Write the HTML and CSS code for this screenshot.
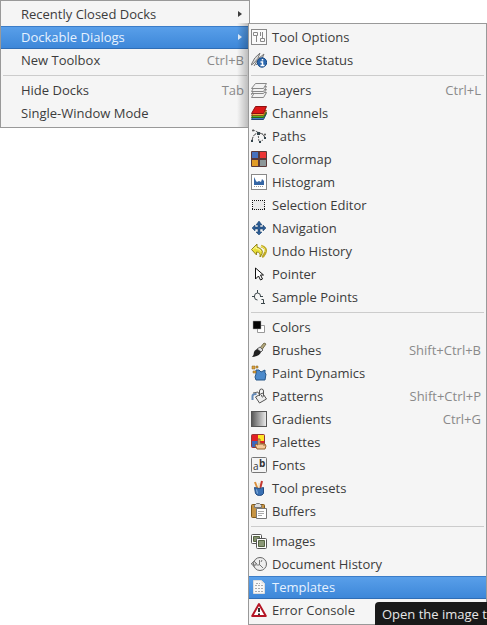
FILE: index.html
```
<!DOCTYPE html>
<html lang="en">
<head>
    <meta charset="UTF-8">
    <meta name="viewport" content="width=device-width, initial-scale=1.0">
    <title>Dockable Dialogs</title>
    <link rel="stylesheet" href="styles.css">
</head>
<body>
    <div class="menus">
        <ul class="menu root-menu">
            <li><button class="item">Recently Closed Docks <span class="arrow"></span></button></li>
            <li><button class="item selected">Dockable Dialogs <span class="arrow"></span></button></li>
            <li><button class="item">New Toolbox <kbd>Ctrl+B</kbd></button></li>
            <li class="separator"></li>
            <li><button class="item">Hide Docks <kbd>Tab</kbd></button></li>
            <li><button class="item">Single-Window Mode</button></li>
        </ul>

        <ul class="menu sub-menu">
            <li><button class="item">
                <svg class="icon" viewBox="0 0 16 16"><rect x=".5" y=".5" width="15" height="15" fill="#fafafa" stroke="#888"/><path d="M2.500 3.500h4v3h-4zM5.500 7v6M9.500 9.500h4v3h-4zM11.500 3v6M9.500 3v4" fill="none" stroke="#888"/></svg>
                Tool Options</button></li>
            <li><button class="item">
                <svg class="icon" viewBox="0 0 16 16"><path d="M0 13Q3 5 9 1Q8 7 2 12zM3 14Q7 5 13 2Q12 8 5 13" fill="#ddd" stroke="#777"/><circle cx="11" cy="10.500" r="4.700" fill="#2d68ae" stroke="#174a86"/><path d="M11.500 7v1.500M9.500 10h2v3M9.500 13.500h4" fill="none" stroke="#fff" stroke-width="1.500"/></svg>
                Device Status</button></li>
            <li class="separator"></li>
            <li><button class="item">
                <svg class="icon" viewBox="0 0 16 16"><g fill="#f2f2f2" stroke="#888"><path d="M3.500 10.500h12l-3 5h-12z"/><path d="M3.500 7.500h12l-3 4h-12v1z"/><path d="M3.500 4.500h12l-3 5h-12z"/><path d="M4.500 1.500h11l-3 5h-12z"/></g></svg>
                Layers <kbd>Ctrl+L</kbd></button></li>
            <li><button class="item">
                <svg class="icon" viewBox="0 0 16 16"><path d="M3.500 8.500h12l-3 6h-12z" fill="#4580c4" stroke="#254774"/><path d="M3.500 7.500h12l-3 5h-12z" fill="#54b52b" stroke="#286711"/><path d="M3.500 5.500h12l-3 5h-12z" fill="#f0ad3e" stroke="#925819"/><path d="M4.500 1.500h11l-3 7h-12z" fill="#dc1717" stroke="#8d1010"/></svg>
                Channels</button></li>
            <li><button class="item">
                <svg class="icon" viewBox="0 0 16 16"><path d="M1 13Q2 5 8 5Q13 6 14 10" fill="none" stroke="#444" stroke-dasharray="4 1"/><path d="M2 2l12 5M7 5l1 9 4-2" fill="none" stroke="#666" stroke-dasharray="2 1"/><path d="M0 12h2v2H0zM6 4h3v3H6zM13 9h2v2h-2zM8 13h2v2H8z" fill="#33434b"/><circle cx="2" cy="2.500" r="1" fill="#555"/><circle cx="14" cy="6.500" r="1" fill="#555"/></svg>
                Paths</button></li>
            <li><button class="item">
                <svg class="icon" viewBox="0 0 16 16"><rect width="16" height="16" rx="1" fill="#5a3838"/><path d="M1 1h6v6H1z" fill="#4670bd"/><path d="M9 1h6v6H9z" fill="#eb3434"/><path d="M1 9h6v6H1z" fill="#e19b26"/><path d="M9 9h6v6H9z" fill="#8d9799"/></svg>
                Colormap</button></li>
            <li><button class="item">
                <svg class="icon" viewBox="0 0 16 16"><rect x=".5" y=".5" width="15" height="15" fill="#fff" stroke="#888"/><path d="M3 11V3l2 4 1 1 2-1 2 1 1-3 2 2v4z" fill="#3465a4"/><path d="M3 12.500h10" stroke="#999" stroke-dasharray="1 1"/></svg>
                Histogram</button></li>
            <li><button class="item">
                <svg class="icon" viewBox="0 0 16 16"><path d="M2 4h12v9H2z" fill="#e9e9e9"/><path d="M1 3.500h13M1 12.500h13M1.500 3v10M13.500 3v10" fill="none" stroke="#111" stroke-dasharray="1 1"/></svg>
                Selection Editor</button></li>
            <li><button class="item">
                <svg class="icon" viewBox="0 0 16 16"><path d="M8 1l3 4H9v2h3V5l3 3-3 3V9H9v3h2l-3 3-3-3h2V9H4v2L1 8l3-3v2h3V5H5z" fill="#2c5c94" stroke="#163e6b" stroke-width=".5"/></svg>
                Navigation</button></li>
            <li><button class="item">
                <svg class="icon" viewBox="0 0 16 16"><path d="M10 3Q16 5 14.500 9Q13 13 11 14" fill="none" stroke="#bda829" stroke-width="2.500"/><path d="M10 3Q15 5 14 9" fill="none" stroke="#fff46a"/><path d="M6 1L.5 6.500l5 5.500V9Q10 9 9 14Q15 7 6 4z" fill="#e9df37" stroke="#94851c"/><path d="M2 6.500l3-3v2q4 0 5 3" fill="none" stroke="#fffb9d"/></svg>
                Undo History</button></li>
            <li><button class="item">
                <svg class="icon" viewBox="0 0 16 16"><path d="M4.500 2v11l3-3 2 4 2-1-2-4h3z" fill="#fff" stroke="#111"/></svg>
                Pointer</button></li>
            <li><button class="item">
                <svg class="icon" viewBox="0 0 16 16"><path d="M6.500 1v3M1 7.500h3M9 7.500h3M3.500 7q0-3 3-3t3 3M3.500 8q0 3 3 3M10.500 10.500h2v4M10 14.500h4" fill="none" stroke="#3c474b"/></svg>
                Sample Points</button></li>
            <li class="separator"></li>
            <li><button class="item">
                <svg class="icon" viewBox="0 0 16 16"><path d="M6.500 6.500h7v7h-7z" fill="#fff" stroke="#999"/><path d="M2 2h8v8H2z" fill="#050505" stroke="#aaa" stroke-width=".5"/></svg>
                Colors</button></li>
            <li><button class="item">
                <svg class="icon" viewBox="0 0 16 16"><path d="M8 7l5-6 2 1-5 7z" fill="#b4a87c" stroke="#77704f"/><path d="M6 7l3-2 3 3-2 2z" fill="#ddd" stroke="#666"/><path d="M6 7l4 3q-1 4-9 5 2-2 2-5 1-2 3-3z" fill="#222"/></svg>
                Brushes <kbd>Shift+Ctrl+B</kbd></button></li>
            <li><button class="item">
                <svg class="icon" viewBox="0 0 16 16"><path d="M5 5h3l2 2 4-2v3l1 1-1 6H5l-1-3 1-3z" fill="#4c8acb" stroke="#285889"/><path d="M1 1h3v3H1zM5 1h2v2H5zM2 6h3v2H2z" fill="#e0a43c" stroke="#805c1c" stroke-width=".5"/></svg>
                Paint Dynamics</button></li>
            <li><button class="item">
                <svg class="icon" viewBox="0 0 16 16"><path d="M1.500 12V8q0-2 4-2" fill="none" stroke="#6289b8" stroke-width="2"/><path d="M4.500 9l7-4 4 6-7 4z" fill="#eee" stroke="#555"/><path d="M8.500 8V3q0-2 2-2t2 2v4q0 2-1 2t-1-2" fill="none" stroke="#555"/><path d="M2 5l5-1 1 2" fill="none" stroke="#666"/></svg>
                Patterns <kbd>Shift+Ctrl+P</kbd></button></li>
            <li><button class="item">
                <svg class="icon" viewBox="0 0 16 16"><defs><linearGradient id="gray"><stop stop-color="#555"/><stop offset="1" stop-color="#eee"/></linearGradient></defs><rect x=".5" y=".5" width="15" height="15" fill="url(#gray)" stroke="#555"/></svg>
                Gradients <kbd>Ctrl+G</kbd></button></li>
            <li><button class="item">
                <svg class="icon" viewBox="0 0 16 16"><rect x=".5" y=".5" width="13" height="13" rx="1" fill="#e21f25" stroke="#973636"/><path d="M7 1h6v6H7z" fill="#ffe629"/><path d="M1 7h6v6H1z" fill="#3c66bd"/><path d="M6 15l-2-4 1-1 2 1V5h2v4l5 1 1 2-1 3z" fill="#f4c99a" stroke="#96602e"/><path d="M9 9v2M11 9v2M13 10v2" stroke="#96602e"/></svg>
                Palettes</button></li>
            <li><button class="item">
                <svg class="icon" viewBox="0 0 16 16"><rect x=".5" y=".5" width="15" height="15" rx="1" fill="#f4f4f4" stroke="#777"/><text class="letter" x="2" y="13">a</text><text class="letter bold" x="8" y="10">b</text></svg>
                Fonts</button></li>
            <li><button class="item">
                <svg class="icon" viewBox="0 0 16 16"><path d="M4 2l3 8" stroke="#da8f3c" stroke-width="2"/><path d="M11 1L9 9" stroke="#c43930" stroke-width="2"/><path d="M8 3v6" stroke="#eed7a2"/><path d="M3.500 7.500q5 2 9 0v6q-1 2-4 2t-4-2z" fill="#3970b3" stroke="#234d83"/><path d="M5.500 9.500l1 4" stroke="#8fb7e2"/></svg>
                Tool presets</button></li>
            <li><button class="item">
                <svg class="icon" viewBox="0 0 16 16"><rect x=".5" y="1.500" width="13" height="13" rx="1" fill="#c69445" stroke="#805919"/><path d="M3.500 2.500l2-2h3l2 2v2h-7z" fill="#ddd" stroke="#777"/><path d="M5.500 5.500h10v10h-10z" fill="#fff" stroke="#777"/><path d="M7 8.500h6M7 10.500h6M7 12.500h4" stroke="#aaa"/></svg>
                Buffers</button></li>
            <li class="separator"></li>
            <li><button class="item">
                <svg class="icon" viewBox="0 0 16 16"><rect x=".5" y="1.500" width="10" height="9" rx="1" fill="#fff" stroke="#555"/><path d="M2.500 3.500h6v5h-6z" fill="#83936e" stroke="#566442"/><rect x="5.500" y="5.500" width="10" height="10" rx="1" fill="#fff" stroke="#555"/><path d="M7.500 7.500h6v6h-6z" fill="#8b9877" stroke="#566442"/></svg>
                Images</button></li>
            <li><button class="item">
                <svg class="icon" viewBox="0 0 16 16"><circle cx="9" cy="8" r="6.500" fill="#eee" stroke="#666"/><path d="M0 8l3-3 3 3H4v2H2V8zM8.500 4v5h-3M9 9l3 3M11 4l-1 2" fill="none" stroke="#777"/></svg>
                Document History</button></li>
            <li><button class="item selected">
                <svg class="icon" viewBox="0 0 16 16"><path d="M2.500 1.500h8l3 3v10h-11z" fill="#f7f7f7" stroke="#ddd"/><path d="M5 4.500h4M4 6.500h8M4 9.500h8M4 12.500h8" stroke="#aaa" stroke-dasharray="2 1"/><path d="M10.500 1.500v3h3" fill="#ddd"/></svg>
                Templates</button></li>
            <li class="has-tip"><button class="item">
                <svg class="icon" viewBox="0 0 16 16"><path d="M8 2l6.800 12H1.200z" fill="#fff" stroke="#b51626" stroke-width="2" stroke-linejoin="round"/><path d="M8 6v4M8 11.500v1.500" stroke="#333" stroke-width="2"/></svg>
                Error Console</button>
                <div class="tooltip" role="tooltip">Open the image templates dialog</div></li>
        </ul>
    </div>
</body>
</html>
```
FILE: styles.css
```
body {
    margin: 0;
    background: #fff;
    font-family: "Open Sans", "Noto Sans", sans-serif;
    font-size: 13px;
    color: #3c3c3c;
}
.menus {
    display: flex;
    align-items: flex-start;
    min-height: 100vh;
    overflow: hidden;
}
.menu {
    position: relative;
    box-sizing: border-box;
    margin: 0;
    padding: 2px 0;
    list-style: none;
    background: #f5f5f5;
    border: 1px solid #999;
}
.root-menu {
    flex: 0 0 250px;
}
/* shadow that the open submenu throws on its parent */
.root-menu::after {
    content: "";
    position: absolute;
    top: 22px;
    right: 0;
    bottom: 0;
    width: 12px;
    background: linear-gradient(to right, transparent, rgba(0, 0, 0, 0.25));
}
.sub-menu {
    flex: 1;
    margin: 23px 0 0 -2px;
}
.item {
    display: flex;
    align-items: center;
    box-sizing: border-box;
    width: 100%;
    height: 23px;
    margin: 0;
    padding: 0 5px 2px 20px;
    border: 0;
    background: none;
    font: inherit;
    color: inherit;
    text-align: left;
    white-space: nowrap;
}
.sub-menu .item {
    padding-left: 2px;
}
.selected {
    background: linear-gradient(#5aa0ea, #3c86d8);
    box-shadow: inset 0 1px #3b7dc8, inset 0 -1px #2f6db5;
    color: #e6f2ff;
}
.icon {
    flex: none;
    width: 16px;
    height: 16px;
    margin-right: 5px;
}
.letter {
    font-size: 10px;
    fill: #333;
}
.bold {
    font-weight: bold;
}
kbd {
    margin-left: auto;
    font: inherit;
    color: #8a8a8a;
}
.arrow {
    margin: 0 2px 0 auto;
    border: 3px solid transparent;
    border-left: 4px solid currentColor;
    border-right: 0;
}
.separator {
    height: 1px;
    margin: 3px 2px;
    background: #ccc;
}
.has-tip {
    position: relative;
}
.tooltip {
    position: absolute;
    top: 3px;
    left: 126px;
    padding: 3px 7px 5px;
    border-radius: 4px;
    background: #191919;
    color: #e6e6e6;
    line-height: 18px;
    white-space: nowrap;
}
```
